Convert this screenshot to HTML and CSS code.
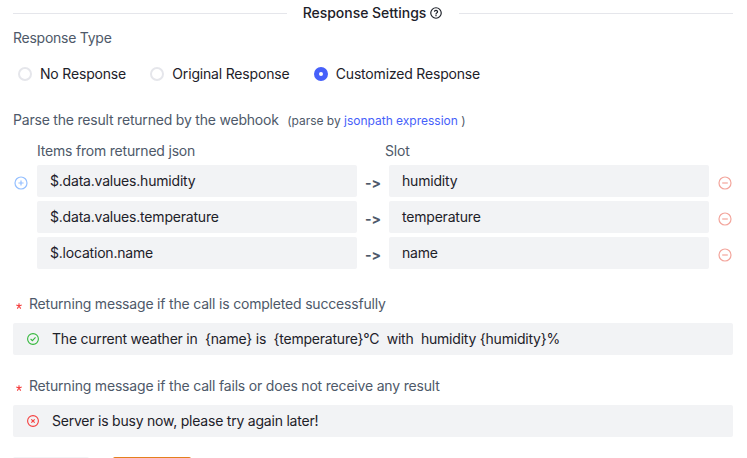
FILE: index.html
```html
<!DOCTYPE html>
<html lang="en">
<head>
<meta charset="utf-8">
<title>Response Settings</title>
<link rel="stylesheet" href="styles.css">
</head>
<body>
<main class="form">
  <div class="divider">
    <h1 class="divider-title">Response Settings
      <svg class="help" viewBox="0 0 48 48" fill="none" stroke="currentColor" stroke-width="4"><path d="M42 24c0 9.941-8.059 18-18 18S6 33.941 6 24 14.059 6 24 6s18 8.059 18 18Z"/><path d="M24.006 31v4.008m0-6.008L24 28c0-3 3-4 4.78-6.402C30.558 19.195 28.288 15 23.987 15c-4.014 0-5.382 2.548-5.388 4.514v.465"/></svg>
    </h1>
  </div>

  <div class="label type-label">Response Type</div>
  <div class="radios">
    <label class="radio"><i class="dot"></i>No Response</label>
    <label class="radio"><i class="dot"></i>Original Response</label>
    <label class="radio"><i class="dot checked"></i>Customized Response</label>
  </div>

  <div class="label parse-label"><span>Parse the result returned by the webhook</span><small class="hint">(parse by <a class="link">jsonpath expression</a> )</small></div>

  <div class="columns label"><span class="col-items">Items from returned json</span><span>Slot</span></div>
  <div class="rows">
    <div class="row">
      <svg class="icon add" viewBox="0 0 14 14"><circle cx="7" cy="7" r="6"/><path d="M4.4 7h5.2M7 4.4v5.2"/></svg>
      <div class="input">$.data.values.humidity</div><b class="arrow">-&gt;</b><div class="input">humidity</div>
      <svg class="icon remove" viewBox="0 0 14 14"><circle cx="7" cy="7" r="6"/><path d="M4.2 7h5.6"/></svg>
    </div>
    <div class="row">
      <span></span>
      <div class="input">$.data.values.temperature</div><b class="arrow">-&gt;</b><div class="input">temperature</div>
      <svg class="icon remove" viewBox="0 0 14 14"><circle cx="7" cy="7" r="6"/><path d="M4.2 7h5.6"/></svg>
    </div>
    <div class="row">
      <span></span>
      <div class="input">$.location.name</div><b class="arrow">-&gt;</b><div class="input">name</div>
      <svg class="icon remove" viewBox="0 0 14 14"><circle cx="7" cy="7" r="6"/><path d="M4.2 7h5.6"/></svg>
    </div>
  </div>

  <section class="message">
    <div class="label required"><svg class="star" viewBox="0 0 6 6"><path d="M3 3V.2M3 3L.3 2.1M3 3l2.7-.9M3 3L1.3 5.6M3 3l1.7 2.6"/></svg>Returning message if the call is completed successfully</div>
    <div class="input message-input">
      <svg class="status success" viewBox="0 0 12 12"><circle cx="6" cy="6" r="5.4"/><path d="M3.6 6l1.8 1.7 3.1-3.3"/></svg>
      <span class="message-text">The current weather in  {name} is  {temperature}°C  with  humidity {humidity}%</span>
    </div>
  </section>
  <section class="message">
    <div class="label required"><svg class="star" viewBox="0 0 6 6"><path d="M3 3V.2M3 3L.3 2.1M3 3l2.7-.9M3 3L1.3 5.6M3 3l1.7 2.6"/></svg>Returning message if the call fails or does not receive any result</div>
    <div class="input message-input">
      <svg class="status failure" viewBox="0 0 12 12"><circle cx="6" cy="6" r="5.4"/><path d="M4.3 4.3l3.4 3.4M7.7 4.3L4.3 7.7"/></svg>
      <span class="message-text">Server is busy now, please try again later!</span>
    </div>
  </section>

  <div class="actions"><button class="button secondary"></button><button class="button primary"></button></div>
</main>
</body>
</html>
```
FILE: styles.css
```css
* { box-sizing: border-box; }
html, body { height: 100%; overflow: hidden; }
body {
  margin: 0;
  background: #fff;
  color: #1d2129;
  font: 14px/22px Inter, "Liberation Sans", sans-serif;
  letter-spacing: -0.2px;
}
.form {
  display: flex;
  flex-direction: column;
  width: 720px;
  height: 100%;
  margin-left: 13px;
  overflow: hidden;
}
.form > * { flex-shrink: 0; }
.label { color: #4e5969; }

.divider { display: flex; align-items: center; gap: 16px; height: 22px; margin-top: 2px; }
.divider::before, .divider::after { content: ""; flex: 1; height: 1px; background: #e5e6eb; }
.divider-title {
  display: flex;
  align-items: center;
  gap: 3px;
  margin: 0;
  font-size: 14px;
  font-weight: 500;
  letter-spacing: -0.03px;
}
.help { width: 14px; height: 14px; }

.type-label { margin-top: 3px; letter-spacing: -0.25px; }
.radios { display: flex; gap: 24.3px; margin-top: 14px; padding-left: 5px; }
.radio { display: flex; align-items: center; gap: 8px; }
.radio { letter-spacing: -0.18px; }
.dot { width: 14px; height: 14px; border: 2px solid #e5e6eb; border-radius: 50%; }
.dot.checked { border: 5px solid #4660fa; }

.parse-label { display: flex; gap: 8.4px; margin-top: 24px; }
.hint { padding-top: 1px; font-size: 12px; letter-spacing: -0.01px; }
.link { color: #4660fa; }

.columns { display: flex; margin-top: 8px; padding-left: 24px; }
.col-items { width: 348px; }
.rows { display: flex; flex-direction: column; gap: 4px; margin-top: 3px; }
.row {
  display: grid;
  grid-template-columns: 24px 320px 32px 320px 24px;
  height: 32px;
}
.input { height: 32px; padding: 5px 13px; border-radius: 2px; background: #f2f3f5; }
.arrow {
  padding-top: 7px;
  color: #4e5969;
  text-align: center;
  font-weight: 700;
  font-variant-ligatures: none;
  font-feature-settings: "calt" 0;
  letter-spacing: 0;
}
.icon { width: 14px; height: 14px; margin-top: 11px; fill: none; stroke-width: 1.2; }
.add { margin-left: 1px; stroke: #94bfff; }
.remove { margin-left: 9px; stroke: #f3a59c; }

.message { margin-top: 24px; }
.message + .message { margin-top: 20px; }
.required { display: flex; align-items: center; margin-bottom: 8px; letter-spacing: -0.19px; }
.star { width: 6px; height: 6px; margin: 4px 7px 0 3px; stroke: #f53f3f; stroke-width: 1.1; fill: none; }
.message-input { display: flex; align-items: center; padding: 0 14px; }
.status { width: 12px; height: 12px; margin-right: 13px; fill: none; stroke-width: 1.1; }
.success { stroke: #34b83c; }
.failure { stroke: #f53f3f; }
.message-text { white-space: pre; letter-spacing: -0.22px; }

.actions { display: flex; gap: 24px; margin-top: 20px; }
.button { height: 32px; padding: 0; border: 0; border-radius: 2px; }
.secondary { width: 76px; background: #f2f3f5; }
.primary { width: 78px; background: #e4801d; }
```
